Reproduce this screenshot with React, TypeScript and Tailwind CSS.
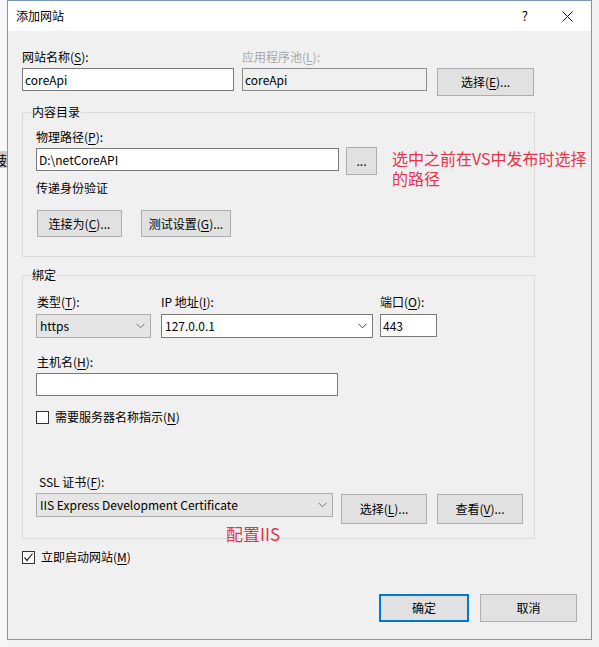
import type { ReactNode } from "react";

function U({ c }: { c: string }) {
  return <span className="underline underline-offset-[2px]">{c}</span>;
}

function Field({ value, className, disabled }: { value?: string; className: string; disabled?: boolean }) {
  return (
    <div
      className={`flex h-[23px] items-center border pl-[2px] ${
        disabled ? "border-[#8c8c8c] bg-[#f0f0f0]" : "border-[#7a7a7a] bg-white"
      } ${className}`}
    >
      {value}
    </div>
  );
}

function Btn({ children, className }: { children: ReactNode; className: string }) {
  return (
    <button
      type="button"
      className={`flex shrink-0 items-center justify-center border border-[#adadad] bg-[#e1e1e1] text-[12px] leading-4 ${className}`}
    >
      {children}
    </button>
  );
}

function Chevron({ color }: { color: string }) {
  return (
    <svg width="9" height="6" viewBox="0 0 9 6" className="shrink-0">
      <polyline points="0.5,0.8 4.5,4.8 8.5,0.8" fill="none" stroke={color} strokeWidth="1" />
    </svg>
  );
}

function Combo({ value, className, gray }: { value: string; className: string; gray?: boolean }) {
  return (
    <div
      className={`flex h-[24px] items-center justify-between border pl-[3px] pr-[5px] ${
        gray ? "border-[#acacac] bg-[#e5e5e5]" : "border-[#7a7a7a] bg-white"
      } ${className}`}
    >
      <span>{value}</span>
      <Chevron color={gray ? "#707070" : "#404040"} />
    </div>
  );
}

function Check({ checked }: { checked?: boolean }) {
  return (
    <div className="flex h-[13px] w-[13px] shrink-0 items-center justify-center border border-[#333] bg-white">
      {checked && (
        <svg width="11" height="11" viewBox="0 0 11 11">
          <polyline points="1.5,5.5 4,8.5 9.5,1.5" fill="none" stroke="#222" strokeWidth="1.2" />
        </svg>
      )}
    </div>
  );
}

export default function App() {
  return (
    <div className="flex h-[647px] w-[599px] bg-[#f3f3f3] font-['Noto_Sans_CJK_SC',sans-serif] text-[12px] leading-4 text-black">
      {/* window behind the dialog */}
      <div className="flex w-[7px] shrink-0 flex-col bg-[#f7f7f7]">
        <div className="h-[151px]" />
        <div className="flex h-[17px] justify-end overflow-hidden bg-[#cccccc]">
          <span className="shrink-0 text-[13px] leading-[17px]">菠</span>
        </div>
      </div>

      <div className="flex h-[640px] w-[585px] shrink-0 flex-col border border-[#7d96b8] bg-[#f0f0f0]">
        {/* title bar */}
        <div className="flex h-[30px] shrink-0 items-center bg-white pl-[8px]">
          <span>添加网站</span>
          <span className="ml-auto text-[13px]">?</span>
          <svg width="11" height="11" viewBox="0 0 11 11" className="ml-[34px] mr-[18px]">
            <path d="M0.5 0.5 L10.5 10.5 M10.5 0.5 L0.5 10.5" stroke="#111" strokeWidth="1" />
          </svg>
        </div>

        <div className="relative flex flex-1 flex-col px-[14px]">
          {/* site name / pool */}
          <div className="mt-[18px] flex">
            <div className="w-[212px]">
              <div>
                网站名称(<U c="S" />):
              </div>
              <Field value="coreApi" className="mt-[3px] w-[212px]" />
            </div>
            <div className="ml-[8px] w-[185px]">
              <div className="text-[#a8a8a8]">
                应用程序池(<U c="L" />):
              </div>
              <Field value="coreApi" disabled className="mt-[3px] w-[185px]" />
            </div>
            <div className="ml-[10px] pt-[19px]">
              <Btn className="h-[28px] w-[97px]">
                选择(<U c="E" />)...
              </Btn>
            </div>
          </div>

          {/* content directory */}
          <fieldset className="mt-[8px] w-[513px] border border-[#dcdcdc]">
            <legend className="ml-[8px] px-px leading-4">内容目录</legend>
            <div className="pb-[19px] pl-[13px] pt-[9px]">
              <div>
                物理路径(<U c="P" />):
              </div>
              <div className="mt-[2px] flex h-[28px] items-start">
                <Field value="D:\netCoreAPI" className="mt-px w-[303px]" />
                <Btn className="ml-[7px] h-[28px] w-[31px]">...</Btn>
              </div>
              <div className="mt-[5px]">传递身份验证</div>
              <div className="mt-[14px] flex pl-px">
                <Btn className="h-[27px] w-[85px]">
                  连接为(<U c="C" />)...
                </Btn>
                <Btn className="ml-[19px] h-[27px] w-[90px]">
                  测试设置(<U c="G" />)...
                </Btn>
              </div>
            </div>
          </fieldset>

          {/* binding */}
          <fieldset className="mt-[10px] w-[513px] border border-[#dcdcdc]">
            <legend className="ml-[8px] px-px leading-4">绑定</legend>
            <div className="pb-[14px] pl-[13px] pt-[11px]">
              <div className="flex">
                <div className="w-[115px]">
                  <div className="pl-px">
                    类型(<U c="T" />):
                  </div>
                  <Combo value="https" gray className="mt-[4px] w-[115px]" />
                </div>
                <div className="ml-[10px] w-[212px]">
                  <div>
                    IP 地址(<U c="I" />):
                  </div>
                  <Combo value="127.0.0.1" className="mt-[4px] w-[212px]" />
                </div>
                <div className="ml-[7px] w-[57px]">
                  <div>
                    端口(<U c="O" />):
                  </div>
                  <Field value="443" className="mt-[4px] w-[57px]" />
                </div>
              </div>

              <div className="mt-[16px] pl-px">
                主机名(<U c="H" />):
              </div>
              <Field className="mt-[3px] w-[302px]" />

              <div className="mt-[13px] flex h-4 items-center">
                <Check />
                <span className="ml-[6px]">
                  需要服务器名称指示(<U c="N" />)
                </span>
              </div>

              <div className="mt-[49px] pl-[3px]">
                SSL 证书(<U c="F" />):
              </div>
              <div className="mt-[3px] flex h-[31px] items-start">
                <Combo value="IIS Express Development Certificate" gray className="w-[297px]" />
                <Btn className="ml-[8px] mt-px h-[30px] w-[86px]">
                  选择(<U c="L" />)...
                </Btn>
                <Btn className="ml-[10px] mt-px h-[30px] w-[86px]">
                  查看(<U c="V" />)...
                </Btn>
              </div>
            </div>
          </fieldset>

          <div className="mt-[10px] flex h-4 items-center">
            <Check checked />
            <span className="ml-[6px]">
              立即启动网站(<U c="M" />)
            </span>
          </div>

          <div className="mt-[29px] flex justify-end">
            <button
              type="button"
              className="flex h-[28px] w-[90px] items-center justify-center border-2 border-[#0078d7] bg-[#e1e1e1] text-[12px]"
            >
              确定
            </button>
            <Btn className="ml-[11px] h-[28px] w-[97px]">取消</Btn>
          </div>

          {/* red annotations drawn over the dialog */}
          <div className="absolute left-[384px] top-[117px] whitespace-nowrap text-[16px] leading-[20px] text-[#e8334a]">
            选中之前在VS中发布时选择
            <br />
            的路径
          </div>
          <div className="absolute left-[218px] top-[493px] whitespace-nowrap text-[17px] leading-[20px] text-[#e8334a]">
            配置IIS
          </div>
        </div>
      </div>
    </div>
  );
}
